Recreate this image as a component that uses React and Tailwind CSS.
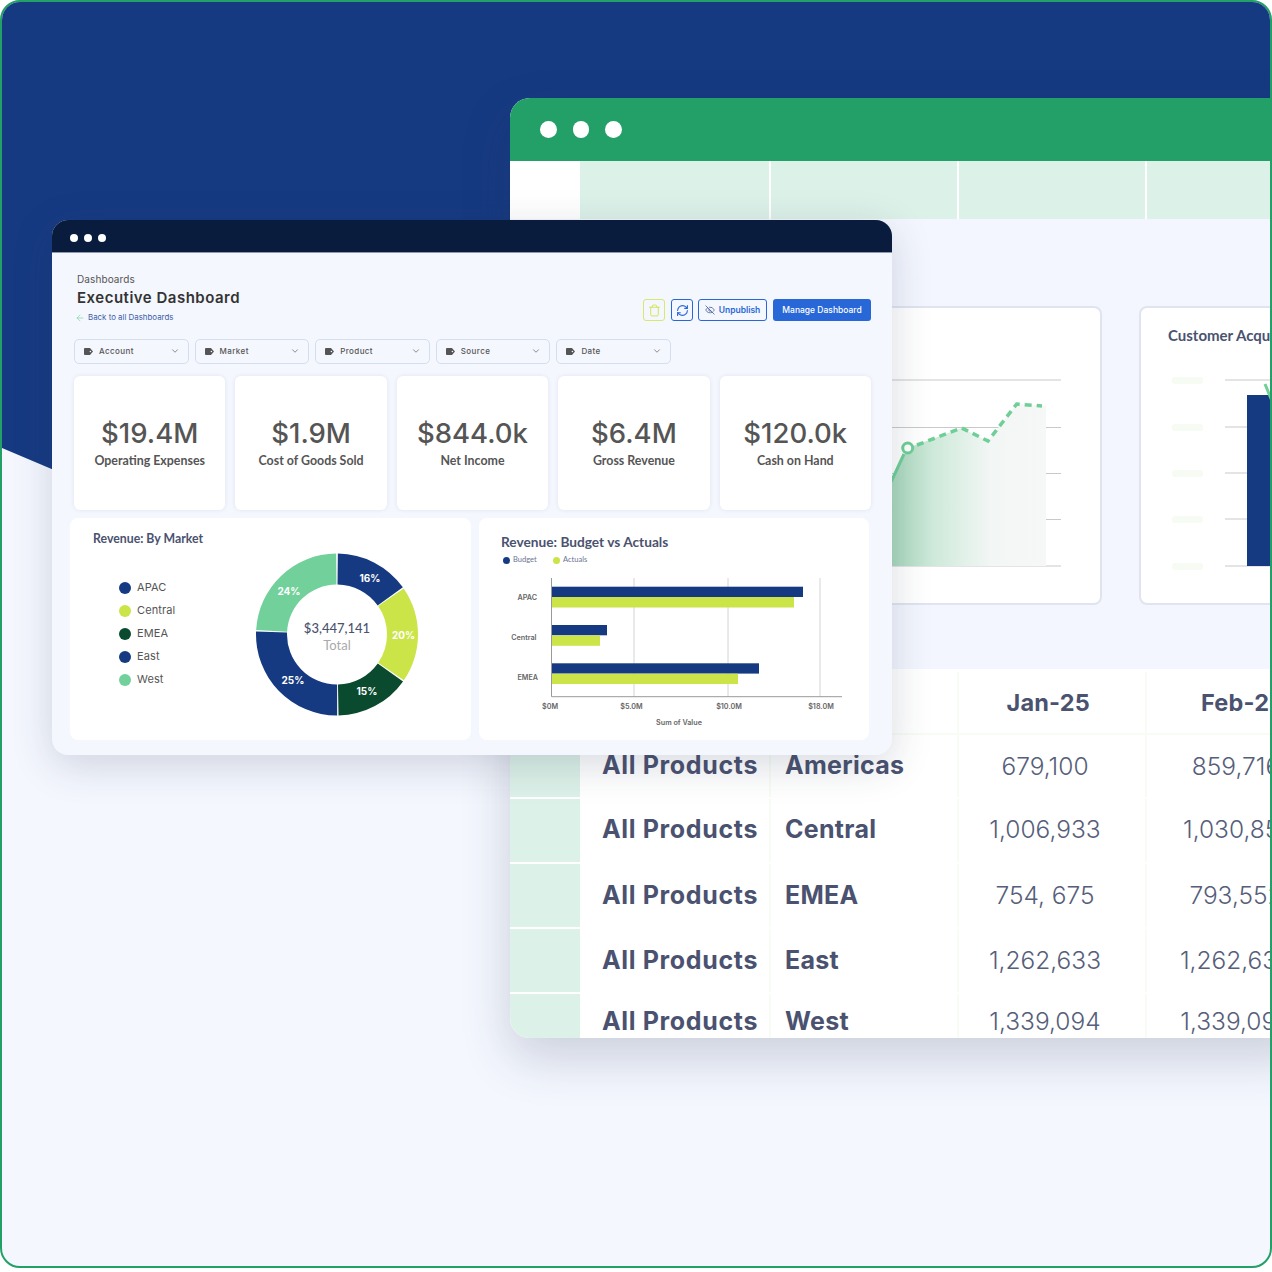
import React from "react";
import { ArrowLeft, ChevronDown, EyeOff, RefreshCw, Trash } from "lucide-react";

const filters = ["Account", "Market", "Product", "Source", "Date"];

const stats = [
  ["$19.4M", "Operating Expenses"],
  ["$1.9M", "Cost of Goods Sold"],
  ["$844.0k", "Net Income"],
  ["$6.4M", "Gross Revenue"],
  ["$120.0k", "Cash on Hand"],
];

const legend = [
  ["APAC", "bg-[#163a82]"],
  ["Central", "bg-[#cbe448]"],
  ["EMEA", "bg-[#0a4a2e]"],
  ["East", "bg-[#163a82]"],
  ["West", "bg-[#72d09b]"],
];

const rows = [
  ["Americas", "679,100", "859,716", "h-[64px]", ""],
  ["Central", "1,006,933", "1,030,851", "h-[65px]", "pb-[2px]"],
  ["EMEA", "754, 675", "793,552", "h-[65px]", ""],
  ["East", "1,262,633", "1,262,633", "h-[65px]", ""],
  ["West", "1,339,094", "1,339,094", "h-[44px]", "pt-[11px]"],
];

const slices = [
  { from: 0.6, to: 54.4, color: "#163a82" },
  { from: 55.4, to: 124.4, color: "#cbe448" },
  { from: 125.4, to: 178.9, color: "#0a4a2e" },
  { from: 179.9, to: 272.2, color: "#163a82" },
  { from: 273.2, to: 359.4, color: "#72d09b" },
];

const point = (r, deg) => {
  const a = ((deg - 90) * Math.PI) / 180;
  return `${337 + r * Math.cos(a)} ${634.5 + r * Math.sin(a)}`;
};

const slicePath = ({ from, to }) => {
  const large = to - from > 180 ? 1 : 0;
  return `M${point(81, from)} A81 81 0 ${large} 1 ${point(81, to)} L${point(50, to)} A50 50 0 ${large} 0 ${point(50, from)} Z`;
};

const TagIcon = () => (
  <svg width="9" height="7" viewBox="0 0 9 7" className="shrink-0">
    <path d="M1 0h5l3 3.5L6 7H1a1 1 0 0 1-1-1V1a1 1 0 0 1 1-1z" fill="#555" />
    <circle cx="6.4" cy="3.5" r="0.8" fill="#f4f7fe" />
  </svg>
);

const Donut = () => (
  <svg width="164" height="166" viewBox="255 552 164 166" className="block mt-[5px]">
    {slices.map((s) => (
      <path key={s.from} d={slicePath(s)} fill={s.color} />
    ))}
    <g className="[font-family:Inter,sans-serif] font-bold" fontSize="10" fill="#fff" textAnchor="middle">
      <text x="370" y="582">16%</text>
      <text x="403.5" y="639">20%</text>
      <text x="367" y="695">15%</text>
      <text x="293" y="684">25%</text>
      <text x="289" y="595">24%</text>
    </g>
    <g className="[font-family:Lato,sans-serif]" fontSize="13" textAnchor="middle">
      <text x="337" y="632.5" fill="#4a5270" fontWeight="500">$3,447,141</text>
      <text x="337" y="650" fill="#aaaaaa">Total</text>
    </g>
  </svg>
);

const BarChart = () => (
  <svg width="390" height="175" viewBox="479 565 390 175" className="block">
    <g stroke="#d4d4d4" strokeWidth="1">
      <line x1="634" y1="578" x2="634" y2="697" />
      <line x1="728" y1="578" x2="728" y2="697" />
      <line x1="820" y1="578" x2="820" y2="697" />
    </g>
    <rect x="552" y="586.7" width="251" height="10.3" fill="#163a82" />
    <rect x="552" y="597" width="242" height="10.5" fill="#cbe448" />
    <rect x="552" y="625" width="55" height="10.3" fill="#163a82" />
    <rect x="552" y="635.5" width="48" height="10.3" fill="#cbe448" />
    <rect x="552" y="663.3" width="207" height="10.3" fill="#163a82" />
    <rect x="552" y="673.7" width="186" height="10.3" fill="#cbe448" />
    <path d="M551.5 578V696.7H842" fill="none" stroke="#999" strokeWidth="1" />
    <g className="[font-family:Inter,sans-serif] font-semibold" fontSize="7.2" fill="#666">
      <text x="537" y="599.5" textAnchor="end">APAC</text>
      <text x="536.5" y="639.5" textAnchor="end">Central</text>
      <text x="538" y="679.5" textAnchor="end">EMEA</text>
      <text x="550" y="708.5" textAnchor="middle">$0M</text>
      <text x="631.5" y="708.5" textAnchor="middle">$5.0M</text>
      <text x="729" y="708.5" textAnchor="middle">$10.0M</text>
      <text x="821" y="708.5" textAnchor="middle">$18.0M</text>
      <text x="679" y="724.5" textAnchor="middle">Sum of Value</text>
    </g>
  </svg>
);

const AreaChart = () => (
  <svg width="518" height="295" viewBox="582 308 518 295" className="block">
    <defs>
      <linearGradient id="area" x1="0" y1="0" x2="1" y2="0">
        <stop offset="0" stopColor="#8fcfae" />
        <stop offset="0.17" stopColor="#a8d8bc" />
        <stop offset="0.38" stopColor="#cce8d8" />
        <stop offset="0.54" stopColor="#dff0e7" />
        <stop offset="0.7" stopColor="#f2f6f4" />
        <stop offset="1" stopColor="#f6f8f7" />
      </linearGradient>
    </defs>
    <g stroke="#c9c9cd" strokeWidth="1">
      <line x1="700" y1="380" x2="1061" y2="380" />
      <line x1="700" y1="427.5" x2="1061" y2="427.5" />
      <line x1="700" y1="473.5" x2="1061" y2="473.5" />
      <line x1="700" y1="519.5" x2="1061" y2="519.5" />
      <line x1="700" y1="566" x2="1061" y2="566" />
    </g>
    <path
      d="M860 525L892 480L907.7 448L961.7 428L988 441L1016.7 404L1046 406V566H860Z"
      fill="url(#area)"
    />
    <path d="M860 525L892 480L904 454" fill="none" stroke="#6fcf97" strokeWidth="3" />
    <path
      d="M917 445L961.7 428L988 441L1016.7 404L1042 406"
      fill="none"
      stroke="#6fcf97"
      strokeWidth="3.5"
      strokeDasharray="7 5"
    />
    <circle cx="907.7" cy="448" r="5" fill="#fff" stroke="#6fcf97" strokeWidth="3" />
  </svg>
);

const AcquisitionChart = () => (
  <svg width="398" height="257" viewBox="1141 346 398 257" className="block">
    {[380, 427, 473, 519, 566].map((y) => (
      <g key={y}>
        <rect x="1172" y={y - 3} width="31" height="7" rx="3" fill="#f6fcf3" />
        <line x1="1225" y1={y} x2="1272" y2={y} stroke="#c9c9cd" strokeWidth="1" />
      </g>
    ))}
    <rect x="1247" y="395" width="60" height="171" fill="#163a82" />
    <path d="M1265 384L1272 401" stroke="#6fcf97" strokeWidth="3" />
  </svg>
);

const BackWindow = () => (
  <div className="absolute left-[508px] top-[96px] w-[800px] h-[940px] rounded-[20px] overflow-hidden bg-white shadow-[0_20px_50px_rgba(40,50,80,0.2)]">
    <div className="h-[63px] bg-[#22a067] flex items-center pl-[30px] gap-[16px]">
      <span className="w-[16.5px] h-[16.5px] rounded-full bg-white" />
      <span className="w-[16.5px] h-[16.5px] rounded-full bg-white" />
      <span className="w-[16.5px] h-[16.5px] rounded-full bg-white" />
    </div>
    <div className="h-[58px] flex bg-white">
      <div className="w-[70px]" />
      <div className="w-[189px] bg-[#dcf1e8]" />
      <div className="w-[186px] ml-[2px] bg-[#dcf1e8]" />
      <div className="w-[186px] ml-[2px] bg-[#dcf1e8]" />
      <div className="flex-1 ml-[2px] bg-[#dcf1e8]" />
    </div>
    <div className="h-[450px] bg-[#f3f6fe] pt-[87px] pl-[70px] flex items-start gap-[37px]">
      <div className="w-[522px] h-[299px] shrink-0 bg-white border-2 border-[#dfe4ef] rounded-[8px]">
        <AreaChart />
      </div>
      <div className="w-[402px] h-[299px] shrink-0 bg-white border-2 border-[#dfe4ef] rounded-[8px]">
        <p className="pl-[27px] pt-[17px] pb-[1px] text-[15px] leading-[20px] font-bold text-[#4a5270] whitespace-nowrap [font-family:Lato,sans-serif]">
          Customer Acquisition
        </p>
        <AcquisitionChart />
      </div>
    </div>
    <div className="h-[66px] pt-[3px] flex bg-white border-b-2 border-[#f7fcf4]">
      <div className="w-[70px] shrink-0 bg-[#dcf1e8]" />
      <div className="w-[191px] shrink-0 border-r-2 border-[#f7fcf4]" />
      <div className="w-[188px] shrink-0 border-r-2 border-[#f7fcf4]" />
      <div className="w-[188px] shrink-0 border-r-2 border-[#f7fcf4] flex items-center justify-end pr-[55px] text-[23.5px] font-bold text-[#4a5270] tracking-[0.2px]">
        Jan-25
      </div>
      <div className="pl-[54px] flex items-center text-[23.5px] font-bold text-[#4a5270] tracking-[0.2px] whitespace-nowrap">
        Feb-25
      </div>
    </div>
    {rows.map(([market, jan, feb, height, nudge]) => (
      <div key={market} className={`${height} flex bg-white border-b-2 border-white last:border-b-0`}>
        <div className="w-[70px] shrink-0 bg-[#dcf1e8]" />
        <div className={`${nudge} w-[191px] shrink-0 pl-[22px] border-r-2 border-[#f7fcf4] flex items-center text-[25px] font-bold tracking-[0.65px] text-[#4a5270] whitespace-nowrap`}>
          All Products
        </div>
        <div className={`${nudge} w-[188px] shrink-0 pl-[14px] border-r-2 border-[#f7fcf4] flex items-center text-[25px] font-bold text-[#4a5270] tracking-[0.3px]`}>
          {market}
        </div>
        <div className={`${nudge} w-[188px] shrink-0 pr-[14px] border-r-2 border-[#f7fcf4] flex items-center justify-center text-[24.5px] font-light text-[#565e7a] whitespace-nowrap`}>
          {jan}
        </div>
        <div className={`${nudge} w-[178px] shrink-0 flex items-center justify-center text-[24.5px] font-light text-[#565e7a] whitespace-nowrap`}>
          {feb}
        </div>
      </div>
    ))}
  </div>
);

const FrontWindow = () => (
  <div className="absolute left-[50px] top-[218px] w-[840px] h-[535px] rounded-[16px] overflow-hidden bg-[#f4f7fe] shadow-[0_10px_40px_rgba(40,50,80,0.18)]">
    <div className="h-[33px] pt-[3px] bg-[#0a1c3d] border-b border-[#8d97ad] flex items-center pl-[18px] gap-[6px]">
      <span className="w-[8px] h-[8px] rounded-full bg-white" />
      <span className="w-[8px] h-[8px] rounded-full bg-white" />
      <span className="w-[8px] h-[8px] rounded-full bg-white" />
    </div>
    <div className="h-[86px] pl-[25px] pr-[21px] pt-[20px] flex justify-between">
      <div>
        <p className="text-[10px] leading-[12px] text-[#555] tracking-[0.1px]">Dashboards</p>
        <p className="mt-[3px] text-[15px] leading-[20px] font-semibold tracking-[0.5px] text-[#333]">
          Executive Dashboard
        </p>
        <div className="mt-[4px] -ml-[2px] flex items-center gap-[3px] text-[7.9px] leading-[11px] text-[#3b5ea8]">
          <ArrowLeft size={10} className="text-[#72d09b]" strokeWidth={1.5} />
          <span>Back to all Dashboards</span>
        </div>
      </div>
      <div className="mt-[26px] flex items-start">
        <button className="w-[22px] h-[22px] flex items-center justify-center rounded-[3px] border border-[#d7e86f]">
          <Trash size={13} className="text-[#cfe54f]" strokeWidth={1.75} />
        </button>
        <button className="ml-[6px] w-[22px] h-[22px] flex items-center justify-center rounded-[3px] border border-[#2767d8]">
          <RefreshCw size={13} className="text-[#2767d8]" strokeWidth={2} />
        </button>
        <button className="ml-[5px] w-[69px] h-[22px] flex items-center justify-center gap-[4px] rounded-[3px] border border-[#2767d8] text-[8.5px] font-semibold text-[#2767d8]">
          <EyeOff size={10} className="text-[#33508f]" strokeWidth={1.75} />
          Unpublish
        </button>
        <button className="ml-[6px] w-[98px] h-[22px] rounded-[3px] bg-[#2767d8] text-[8.5px] font-medium text-white">
          Manage Dashboard
        </button>
      </div>
    </div>
    <div className="pl-[22px] flex gap-[6.1px]">
      {filters.map((name) => (
        <div
          key={name}
          className="w-[114.5px] h-[25px] pl-[9px] pr-[8px] pb-[1px] flex items-center rounded-[5px] border border-[#d3dfef]"
        >
          <TagIcon />
          <span className="ml-[6px] flex-1 text-[8px] font-medium tracking-[0.4px] text-[#555]">{name}</span>
          <ChevronDown size={10} className="text-[#777]" />
        </div>
      ))}
    </div>
    <div className="mt-[12px] ml-[22px] w-[797px] grid grid-cols-5 gap-[10px]">
      {stats.map(([value, label]) => (
        <div
          key={label}
          className="h-[134px] pt-[39px] bg-white rounded-[6px] shadow-[0_0_4px_rgba(60,70,110,0.1)] text-center text-[#555]"
        >
          <p className="text-[27.5px] leading-[36px] font-medium">{value}</p>
          <p className="mt-[2px] text-[12.4px] leading-[16px] font-bold [font-family:Lato,sans-serif]">{label}</p>
        </div>
      ))}
    </div>
    <div className="mt-[8px] ml-[18px] flex gap-[8px]">
      <div className="w-[401px] h-[222px] bg-white rounded-[8px]">
        <p className="pl-[23px] pt-[13px] text-[12.3px] leading-[16px] font-bold text-[#4a5270] [font-family:Lato,sans-serif]">
          Revenue: By Market
        </p>
        <div className="pl-[49px] flex">
          <div className="w-[136px] pt-[29px]">
            {legend.map(([name, color]) => (
              <div key={name} className="h-[23px] flex items-center gap-[6px]">
                <span className={`w-[12px] h-[12px] rounded-full ${color}`} />
                <span className="text-[11px] tracking-[0.1px] text-[#555]">{name}</span>
              </div>
            ))}
          </div>
          <Donut />
        </div>
      </div>
      <div className="w-[390px] h-[222px] bg-white rounded-[8px]">
        <p className="pl-[22px] pt-[14px] text-[13.7px] leading-[20px] font-bold text-[#4a5270] [font-family:Lato,sans-serif]">
          Revenue: Budget vs Actuals
        </p>
        <div className="mt-[3px] pl-[24px] h-[10px] flex items-center text-[7.5px] text-[#6b7390] [font-family:Lato,sans-serif]">
          <span className="w-[7px] h-[7px] rounded-full bg-[#163a82]" />
          <span className="ml-[3px] w-[40px]">Budget</span>
          <span className="w-[7px] h-[7px] rounded-full bg-[#cbe448]" />
          <span className="ml-[3px]">Actuals</span>
        </div>
        <BarChart />
      </div>
    </div>
  </div>
);

export default function App() {
  return (
    <div className="w-[1272px] h-[1272px] bg-white [font-family:Inter,sans-serif]">
      <div className="relative w-[1272px] h-[1268px] rounded-[20px] overflow-hidden border-2 border-[#22a067] bg-[#f4f7fe]">
        <div className="absolute inset-0 bg-[#163a82] [clip-path:polygon(0_0,100%_0,100%_400px,600px_700px,0_446px)]" />
        <BackWindow />
        <FrontWindow />
      </div>
    </div>
  );
}
